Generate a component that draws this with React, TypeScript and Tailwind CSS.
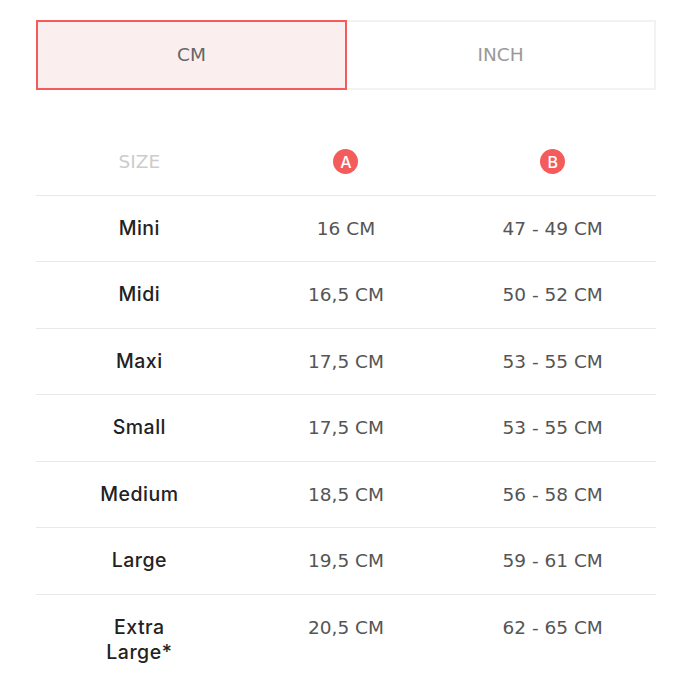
import React from "react";

const rows: [string, string, string][] = [
  ["Mini", "16 CM", "47 - 49 CM"],
  ["Midi", "16,5 CM", "50 - 52 CM"],
  ["Maxi", "17,5 CM", "53 - 55 CM"],
  ["Small", "17,5 CM", "53 - 55 CM"],
  ["Medium", "18,5 CM", "56 - 58 CM"],
  ["Large", "19,5 CM", "59 - 61 CM"],
  ["Extra Large*", "20,5 CM", "62 - 65 CM"],
];

function Badge({ letter }: { letter: string }) {
  return (
    <span
      className="inline-flex h-[25px] w-[25px] items-center justify-center rounded-full bg-[#f45b5b] text-[16px] font-medium leading-none text-white"
      style={{ fontFamily: 'Inter, "DejaVu Sans", sans-serif' }}
    >
      {letter}
    </span>
  );
}

export default function App() {
  return (
    <div
      className="h-[700px] w-[700px] bg-white pt-[20px]"
      style={{ fontFamily: '"DejaVu Sans", "Noto Sans", sans-serif' }}
    >
      <div className="mx-[36px] w-[620px]">
        <div className="flex h-[70px]">
          <button className="flex h-full w-[311px] items-center justify-center border-2 border-[#f45b5b] bg-[#fbeeee] text-[18.5px] text-[#666]">
            CM
          </button>
          <button className="flex h-full flex-1 items-center justify-center border-2 border-l-0 border-[#f2f2f2] bg-white text-[18.5px] text-[#999]">
            INCH
          </button>
        </div>
        <div className="mt-[39px]">
          <div className="grid grid-cols-3 border-b border-[#e8e8e8] pt-[20px] pb-[20.5px] text-center text-[18.5px] leading-[25px]">
            <div className="text-[#cccccc]">SIZE</div>
            <div className="flex items-center justify-center">
              <Badge letter="A" />
            </div>
            <div className="flex items-center justify-center">
              <Badge letter="B" />
            </div>
          </div>
          {rows.map(([s, a, b], i) => (
            <div
              key={i}
              className={
                "grid grid-cols-3 pt-[20px] pb-[20.5px] text-center text-[18.5px] leading-[25px] " +
                (i < rows.length - 1 ? "border-b border-[#e8e8e8]" : "")
              }
            >
              <div
                className="mx-auto max-w-[100px] text-[19.5px] font-medium tracking-[0.5px] text-[#222]"
                style={{ fontFamily: 'Inter, "DejaVu Sans", sans-serif' }}
              >
                {s}
              </div>
              <div className="text-[#555]">{a}</div>
              <div className="text-[#555]">{b}</div>
            </div>
          ))}
        </div>
      </div>
    </div>
  );
}
